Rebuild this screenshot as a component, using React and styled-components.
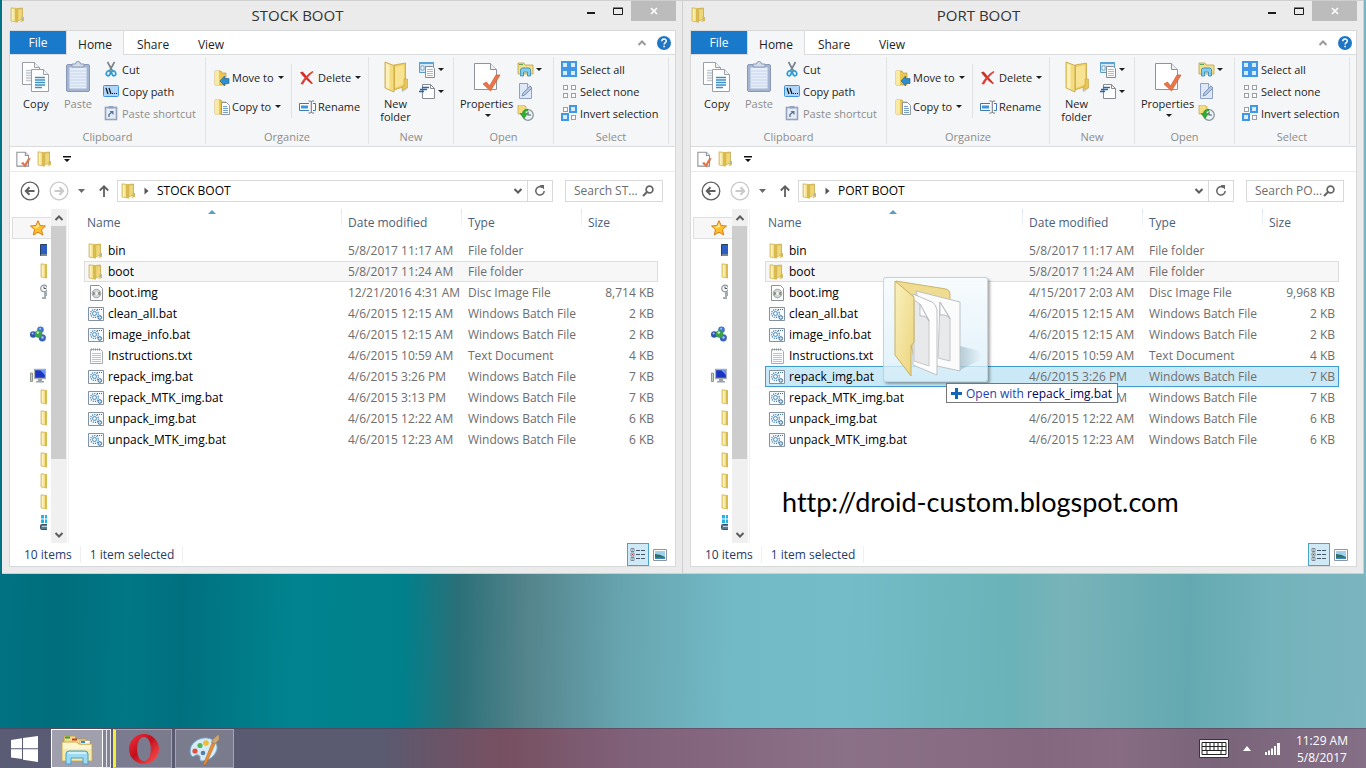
import React from 'react';
import styled, { createGlobalStyle } from 'styled-components';

const GlobalStyle = createGlobalStyle`
  * {
    box-sizing: border-box;
  }
  body {
    margin: 0;
    font-family: 'Open Sans', 'Noto Sans', sans-serif;
    font-size: 12px;
    color: #1e1e1e;
  }
  button, input {
    font: inherit;
    color: inherit;
  }
  svg {
    display: block;
    flex: none;
  }
`;

const Desktop = styled.div`
  min-height: 100vh;
  display: flex;
  flex-direction: column;
  justify-content: space-between;
  background: linear-gradient(
    91deg,
    #007384 0%,
    #006e7c 5%,
    #007786 10%,
    #00707f 14%,
    #00848f 22%,
    #00808b 30%,
    #2b7078 34%,
    #54848c 39%,
    #67a5b0 46%,
    #72bac6 54%,
    #74bcc8 62%,
    #6ab3b8 74%,
    #78b3b9 78%,
    #64a9b1 87%,
    #74b3bb 93%,
    #7bb5bf 100%
  );
`;
const Workspace = styled.main`
  display: flex;
  padding: 0 2px;
`;
const Frame = styled.section`
  position: relative;
  flex: 1 1 0;
  min-width: 0;
  padding: 0 6px 6px 7px;
  background: #ebebeb;
  border: 1px solid #cfcfcf;
  border-left: 0;
`;
const PlainButton = styled.button`
  display: flex;
  align-items: center;
  padding: 0;
  border: 0;
  background: none;
  line-height: 13px;
  white-space: nowrap;
`;
const TitleBar = styled.header`
  display: flex;
  height: 29px;
  padding-left: 1px;
`;
const TitleIcon = styled.span`
  padding-top: 6px;
`;
const Title = styled.h1`
  flex: 1;
  margin: 0;
  padding-right: 8px;
  font-size: 15px;
  font-weight: 400;
  line-height: 29px;
  text-align: center;
  color: #333;
`;
const WindowButton = styled(PlainButton)`
  width: ${(p) => (p.$close ? 45 : 27)}px;
  height: 20px;
  justify-content: center;
  background: ${(p) => (p.$close ? '#bcbcbc' : 'none')};
`;
const Client = styled.div`
  display: flex;
  flex-direction: column;
  background: #fff;
  border: 1px solid #d6d8da;
`;

const TabStrip = styled.nav`
  display: flex;
  height: 24px;
  border-bottom: 1px solid #dadbdc;
`;
const Tab = styled(PlainButton)`
  justify-content: center;
  width: 58px;
  height: 24px;
  padding-top: 2px;
  border: solid ${(p) => (p.$active ? '#dadbdc' : 'transparent')};
  border-width: 0 1px;
  background: ${(p) => (p.$active ? '#f5f6f7' : 'none')};
`;
const FileTab = styled(PlainButton)`
  justify-content: center;
  width: 56px;
  height: 23px;
  background: #1979ca;
  color: #fff;
`;
const TabTools = styled.div`
  display: flex;
  align-items: center;
  gap: 10px;
  margin-left: auto;
  padding-right: 4px;
`;

const RibbonBar = styled.div`
  display: flex;
  height: 92px;
  padding: 2px 0;
  overflow: hidden;
  font-size: 11px;
  background: #f5f6f7;
  border-bottom: 1px solid #dadbdc;
`;
const Group = styled.section`
  display: flex;
  flex: none;
  flex-direction: column;
  width: ${(p) => p.$width}px;
  border-right: 1px solid #e2e3e4;
`;
const GroupBody = styled.div`
  display: flex;
  flex: 1;
  padding-left: ${(p) => p.$inset}px;
`;
const GroupLabel = styled.h2`
  margin: 0;
  font-size: 11px;
  font-weight: 400;
  line-height: 14px;
  text-align: center;
  color: #8c8c8c;
`;
const BigButton = styled(PlainButton)`
  flex-direction: column;
  gap: 4px;
  width: ${(p) => p.$width}px;
  padding-top: 4px;
  white-space: normal;
  text-align: center;
  color: ${(p) => (p.disabled ? '#8c8c8c' : 'inherit')};
`;
const Stack = styled.div`
  display: flex;
  flex-direction: column;
  width: ${(p) => (p.$width ? `${p.$width}px` : 'auto')};
  padding: ${(p) => (p.$tall ? 6 : 1)}px 0 0 ${(p) => p.$inset || 0}px;
`;
const StackDivider = styled.span`
  width: 1px;
  height: 54px;
  margin: 7px 7px 0 0;
  background: #e2e3e4;
`;
const SmallButton = styled(PlainButton)`
  gap: ${(p) => (p.$tight ? 2 : 3)}px;
  height: ${(p) => (p.$tall ? 29 : 22)}px;
  color: ${(p) => (p.disabled ? '#8c8c8c' : 'inherit')};
`;
const MenuButton = styled(SmallButton)`
  gap: 0;
`;
const Caret = styled.span`
  margin-left: 2px;
  border: 3px solid transparent;
  border-top-color: currentColor;
  border-bottom: 0;
`;

const QuickAccess = styled.div`
  display: flex;
  align-items: center;
  gap: 6px;
  height: 25px;
  padding-left: 6px;
  border-bottom: 1px solid #e9eaeb;
`;
const AddressRow = styled.div`
  display: flex;
  align-items: center;
  height: 37px;
  padding: 0 12px 0 10px;
`;
const NavButton = styled(PlainButton)`
  justify-content: center;
  width: ${(p) => p.$width}px;
  height: 22px;
  color: #5c5c5c;
`;
const UpButton = styled(NavButton)`
  width: 22px;
  margin-left: 8px;
`;
const AddressBox = styled.div`
  display: flex;
  flex: 1;
  align-items: center;
  height: 22px;
  margin: 0 12px 0 2px;
  padding-left: 3px;
  border: 1px solid #d9d9d9;
`;
const Crumb = styled(PlainButton)`
  flex: 1;
  gap: 8px;
  padding-left: 7px;
  color: #000;
`;
const Refresh = styled(NavButton)`
  border-left: 1px solid #d9d9d9;
`;
const SearchBox = styled.label`
  display: flex;
  align-items: center;
  width: 98px;
  height: 22px;
  padding: 0 8px;
  border: 1px solid #d9d9d9;
`;
const SearchInput = styled.input`
  flex: 1;
  min-width: 0;
  padding: 0;
  border: 0;
  outline: 0;
  &::placeholder {
    color: #6d6d6d;
  }
`;

const Main = styled.div`
  display: flex;
  height: 334px;
`;
const NavPane = styled.ul`
  width: 41px;
  margin: 0;
  padding: 8px 0 0 2px;
  overflow: hidden;
  list-style: none;
`;
const NavItem = styled.li`
  width: 35px;
  height: 21px;
  padding: 3px 0 0 ${(p) => (p.$child ? 28 : 18)}px;
  overflow: hidden;
`;
const SelectedNavItem = styled(NavItem)`
  width: 39px;
  height: 22px;
  padding: 2px 0 0 17px;
  background: #f7f7f7;
  border: 1px solid #dedede;
  border-right: 0;
`;
const ScrollTrack = styled.div`
  display: flex;
  flex-direction: column;
  width: 16px;
  margin-right: 1px;
  background: #f0f0f0;
`;
const ScrollArrow = styled(PlainButton)`
  justify-content: center;
  height: 17px;
`;
const ScrollThumb = styled.div`
  height: 233px;
  margin: 0 1px 0 0;
  background: #cdcdcd;
`;
const ScrollSpace = styled.div`
  flex: 1;
`;
const FilePane = styled.div`
  flex: 1;
  min-width: 0;
  padding: 0 17px 0 15px;
  border-left: 1px solid #f0f0f0;
`;
const FileTable = styled.table`
  width: 100%;
  table-layout: fixed;
  border-collapse: collapse;
  line-height: 16px;
  color: #6d6d6d;
`;
const HeadCell = styled.th`
  position: relative;
  width: ${(p) => (p.$width ? `${p.$width}px` : 'auto')};
  height: 31px;
  padding: 0 0 4px ${(p) => (p.$first ? 3 : 7)}px;
  font-weight: 400;
  text-align: left;
  color: #4c607a;
  background: ${(p) =>
    p.$first
      ? 'none'
      : 'linear-gradient(#d8e6f2, #eef3f8 70%, #fff) 0 0 / 1px 20px no-repeat'};
`;
const SortMark = styled.span`
  position: absolute;
  top: 1px;
  left: 50%;
  margin-left: -5px;
  border: 4px solid transparent;
  border-top: 0;
  border-bottom-color: #5b9dc0;
`;
const rowColors = {
  focused: ['#f7f7f7', '#dedede'],
  selected: ['#cbe8f6', '#3c9dcb'],
};
const FileRow = styled.tr`
  height: 21px;
  background: ${(p) => (p.$state ? rowColors[p.$state][0] : 'none')};
  outline: ${(p) =>
    p.$state ? `1px solid ${rowColors[p.$state][1]}` : 'none'};
  outline-offset: -1px;
`;
const Cell = styled.td`
  padding: 0 4px 0 7px;
  white-space: nowrap;
  text-align: ${(p) => (p.$right ? 'right' : 'left')};
`;
const NameCell = styled(Cell)`
  padding-left: 4px;
  color: #000;
`;
const FileName = styled.span`
  display: flex;
  align-items: center;
  gap: 4px;
`;

const StatusBar = styled.footer`
  display: flex;
  align-items: center;
  height: 23px;
  padding: 0 4px 0 14px;
  color: #1f3c66;
`;
const StatusText = styled.span`
  margin-right: 9px;
  padding-right: 8px;
  border-right: 1px solid #f0f0f0;
`;
const ViewButton = styled(PlainButton)`
  justify-content: center;
  width: 22px;
  height: 23px;
  border: 1px solid ${(p) => (p.$active ? '#4aa5c9' : 'transparent')};
  background: ${(p) => (p.$active ? '#cfe9f6' : 'none')};
`;
const ViewButtons = styled.div`
  display: flex;
  margin-left: auto;
`;
const Watermark = styled.p`
  margin: 32px 0 0 17px;
  font-family: Lato, sans-serif;
  font-size: 27px;
  font-variant-ligatures: none;
  line-height: 40px;
  color: #000;
`;

const DragGhost = styled.div`
  position: absolute;
  top: 276px;
  left: 200px;
  width: 105px;
  height: 105px;
  border: 1px solid rgba(160, 205, 225, 0.7);
  border-radius: 3px;
  background: linear-gradient(rgba(246, 251, 254, 0.9), rgba(215, 237, 248, 0.75));
  box-shadow: 2px 2px 3px rgba(0, 0, 0, 0.35);
`;
const DropTip = styled.div`
  position: absolute;
  top: 382px;
  left: 263px;
  display: flex;
  align-items: center;
  gap: 4px;
  height: 20px;
  padding: 0 5px 0 4px;
  border: 1px solid #767676;
  background: #fff;
  white-space: nowrap;
  color: #1f3fae;
`;
const DropTarget = styled.span`
  color: #00005f;
`;

const Taskbar = styled.footer`
  display: flex;
  align-items: center;
  height: 40px;
  padding-right: 18px;
  border-top: 1px solid rgba(50, 50, 70, 0.35);
  background: linear-gradient(
    90deg,
    #5a5b74 0%,
    #5a5a70 28%,
    #6a5468 32%,
    #775061 37%,
    #80617a 46%,
    #8b7188 62%,
    #84687f 76%,
    #876c83 82%,
    #79647a 89%,
    #846f86 100%
  );
`;
const StartButton = styled(PlainButton)`
  justify-content: center;
  width: 49px;
  height: 39px;
`;
const TaskButton = styled(PlainButton)`
  justify-content: center;
  width: ${(p) => (p.$active ? 52 : 59)}px;
  height: 39px;
  margin-left: ${(p) => (p.$paint ? 3 : 2)}px;
  border: 1px solid ${(p) => (p.$active ? '#fff' : '#a5a3b4')};
  border-left: ${(p) => (p.$alert ? '3px solid #f3ee3c' : '')};
  background: ${(p) => (p.$active ? '#a09fae' : 'rgba(255, 255, 255, 0.2)')};
`;
const StackedEdge = styled.span`
  width: 4px;
  height: 39px;
  border: solid #e8e8ee;
  border-width: 1px 1px 1px 0;
  background: rgba(255, 255, 255, 0.25);
`;
const Tray = styled.div`
  display: flex;
  align-items: center;
  gap: 14px;
  margin-left: auto;
`;
const Clock = styled.time`
  margin-left: 2px;
  line-height: 17px;
  text-align: center;
  color: #fff;
`;

function FolderIcon() {
  return (
    <svg width="16" height="16" viewBox="0 0 16 16">
      <path d="M7.500 1.500 12.500 1v11l-5 2z" fill="#e5c95e" stroke="#c2a244" strokeWidth=".7" />
      <path d="M1 .8 7.500 1.600v13.600L1 14z" fill="#f1df8c" stroke="#cdb056" strokeWidth=".7" />
      <path d="M5 1.200 7.500 1.600v13.600L5 14.700z" fill="#d9ba4c" />
      <path d="M2 2 3.500 2.200v11.500L2 13.400z" fill="#fbf3c2" />
      <path d="M8.400 3 12 2.500v9L8.400 13.500z" fill="#edd778" />
      <path d="M11.500 10H14v4l-4 1.200 1.500-1.600z" fill="#dcbd50" />
      <path d="M12.300 10.500h1v2.500h-1z" fill="#8fb9d8" />
    </svg>
  );
}

function BigFolderIcon() {
  return (
    <svg width="30" height="32" viewBox="0 0 30 32">
      <path d="M20 30 27 25v2l-5 4z" fill="#000" opacity=".18" />
      <path d="M13 4 24.500 2v23L13 29z" fill="#eccf63" stroke="#c9a23c" strokeWidth=".8" />
      <path d="M14 6 23 4v19l-9 4z" fill="#f7e391" />
      <path d="M4 1 13 4.500V31L4 27z" fill="#f3dc80" stroke="#c49e3c" strokeWidth=".8" />
      <path d="M5 2.500 8.500 4v24L5 26.700z" fill="#fbf0b8" />
      <path d="M23 18h3.500v8.500L21 29v-3l2-1z" fill="#e8c758" stroke="#c9a23c" strokeWidth=".6" />
    </svg>
  );
}

function PageLines({ x, y, lines }) {
  return (
    <g transform={`translate(${x} ${y})`}>
      <path d="M.5.5h12l5 5v17H.5z" fill="#fff" stroke="#9a9fa5" />
      <path d="M12.500.5v5h5" fill="#f2f2f2" stroke="#9a9fa5" />
      <path d="M4 8.500h10M4 11h10M4 13.500h10M4 16h10M4 18.500h7" stroke={lines} strokeWidth="1.300" />
    </g>
  );
}

function CopyIcon() {
  return (
    <svg width="30" height="32" viewBox="0 0 30 32">
      <PageLines x={1} y={1} lines="#c3c9d0" />
      <PageLines x={10} y={8} lines="#3f8ec4" />
    </svg>
  );
}

function PasteIcon() {
  return (
    <svg width="26" height="32" viewBox="0 0 26 32">
      <rect x="1.500" y="3.500" width="23" height="27" rx="1.500" fill="#a5b5d0" stroke="#8898b6" />
      <rect x="4.500" y="6.500" width="17" height="21" fill="#e6eefa" />
      <path d="M5 10h16M5 13h16M5 16h16M5 19h16M5 22h16M5 25h16" stroke="#c5d4ea" />
      <path d="M7 6V3h3.500a2.500 2.500 0 0 1 5 0H19v3z" fill="#d5dde9" stroke="#8898b6" />
    </svg>
  );
}

function CutIcon() {
  return (
    <svg width="16" height="16" viewBox="-1 0 16 16" fill="none">
      <path d="M3.500 1 8.500 10M10.500 1 5.500 10" stroke="#76818c" strokeWidth="1.600" />
      <ellipse cx="4.300" cy="12.300" rx="1.900" ry="2.500" stroke="#2c9bd6" strokeWidth="1.700" transform="rotate(25 4.300 12.300)" />
      <ellipse cx="9.700" cy="12.300" rx="1.900" ry="2.500" stroke="#2c9bd6" strokeWidth="1.700" transform="rotate(-25 9.700 12.300)" />
    </svg>
  );
}

function CopyPathIcon() {
  return (
    <svg width="16" height="16" viewBox="0 0 16 16">
      <rect x=".5" y="2.500" width="15" height="11" rx="1" fill="#aed6fa" stroke="#3e92dc" />
      <path d="m3 5 2 6M6 5l2 6" stroke="#111" strokeWidth="1.200" />
      <path d="M9 10h1v1H9zM11 10h1v1h-1zM13 10h1v1h-1z" />
    </svg>
  );
}

function PasteShortcutIcon() {
  return (
    <svg width="16" height="16" viewBox="-1 0 16 16">
      <rect x="1.500" y="2.500" width="11" height="12" fill="#e5edf8" stroke="#93a3c0" strokeWidth="1.600" />
      <path d="M4.500 1h5v2.500h-5z" fill="#93a3c0" />
      <path d="M5 12V9.500L8 7" fill="none" stroke="#5d7297" strokeWidth="1.400" />
      <path d="M5.500 6h4v4z" fill="#5d7297" />
    </svg>
  );
}

function MoveToIcon() {
  return (
    <svg width="16" height="16" viewBox="0 0 16 16">
      <path d="M1 1h6l1 2h4v12H1z" fill="#eac751" stroke="#c79b2c" strokeWidth=".7" />
      <path d="M1 1h4v14H1z" fill="#f9e9a2" />
      <path d="M15 8.500v5h-4.500V16L6 11l4.500-5v2.500z" fill="#2e8fd0" stroke="#1b5d94" strokeWidth=".6" />
    </svg>
  );
}

function CopyToIcon() {
  return (
    <svg width="16" height="16" viewBox="0 0 16 16">
      <path d="M1 1h6l1 2h4v12H1z" fill="#eac751" stroke="#c79b2c" strokeWidth=".7" />
      <path d="M1 1h4v14H1z" fill="#f9e9a2" />
      <path d="M7.500 3.500h5l3 3v9h-8z" fill="#fff" stroke="#7a8188" strokeWidth=".8" />
      <path d="M9 7.500h4M9 9.500h5M9 11.500h5M9 13.500h5" stroke="#4f87b5" strokeWidth=".8" />
    </svg>
  );
}

function DeleteIcon() {
  return (
    <svg width="17" height="16" viewBox="0 0 17 16">
      <path d="M1 2.500 3.500 1.500C6 4 10 9 14 13.500L12.500 14C8 10.500 4 6.500 1 2.500z" fill="#cf2f24" />
      <path d="M14.500 2C10 5.500 6.500 9.500 4 14.500L1.500 14C4 9 8.500 4 13.500 1z" fill="#dd4034" />
    </svg>
  );
}

function RenameIcon() {
  return (
    <svg width="17" height="16" viewBox="0 0 17 16">
      <path d="M10 4.500H.5v7H10M14 4.500h2.500v7H14" fill="#fff" stroke="#3b7ab0" />
      <path d="M2 6.500h7v3H2z" fill="#3b95dc" />
      <path d="M9.500 2h2l.8.800.8-.8h2M9.500 14h2l.8-.8.8.800h2M12.300 2.500v11" fill="none" stroke="#6e7780" />
    </svg>
  );
}

function NewItemIcon() {
  return (
    <svg width="17" height="17" viewBox="0 0 17 17">
      <path d="M.5 1.500h14v10H.5z" fill="#d5e9f8" stroke="#5b9bc9" />
      <path d="M0 1h15v2H0z" fill="#5aa4d8" />
      <path d="M2 5h3v4H2z" fill="#fff" stroke="#4f8dbd" strokeWidth=".7" />
      <path d="M6.500 5.500h7l2 2v9h-9z" fill="#fff" stroke="#858b91" />
      <path d="M8 8.500h6M8 10.500h6M8 12.500h6M8 14.500h6" stroke="#a9afb5" strokeWidth=".9" />
    </svg>
  );
}

function EasyAccessIcon() {
  return (
    <svg width="17" height="17" viewBox="0 0 17 17">
      <path d="M3.500 1.500h8l4 4v10h-12z" fill="#fff" stroke="#858b91" />
      <path d="M11.500 1.500v4h4" fill="none" stroke="#858b91" />
      <path d="M3 4.500h7M1 6.500h7M0 8.500h5" stroke="#2b68ab" strokeWidth="1.300" />
    </svg>
  );
}

function PropertiesIcon({ size = 32 }) {
  return (
    <svg width={size === 32 ? 28 : 15} height={size} viewBox="0 0 28 32">
      <path d="M1.500 2.500h16l6 6v20h-22z" fill="#fff" stroke="#8d9399" strokeWidth={size === 32 ? 1 : 2} />
      <path d="M17.500 2.500v6h6" fill="#eef0f1" stroke="#8d9399" strokeWidth={size === 32 ? 1 : 2} />
      <path d="m10 23 3.500-2 3 4L23 14h4L17.500 30z" fill="#e9764a" stroke="#cf5a32" strokeWidth=".7" />
    </svg>
  );
}

function OpenIcon() {
  return (
    <svg width="17" height="16" viewBox="0 0 17 16">
      <path d="M1 2h6l1 2h8v9H1z" fill="#f4e08a" stroke="#bf9f43" strokeWidth=".8" />
      <path d="M2 3h4v1H2z" fill="#5fa552" />
      <path d="M3.500 15V9a2 2 0 0 1 2-2h6a2 2 0 0 1 2 2v6h-3v-4h-4v4z" fill="#7fcdf0" stroke="#2e86b8" strokeWidth=".8" />
    </svg>
  );
}

function EditIcon() {
  return (
    <svg width="17" height="16" viewBox="0 0 17 16">
      <path d="M2.500.5h8l4 4v11h-12z" fill="#dfe8f7" stroke="#8fa2c4" />
      <path d="M10.500.5v4h4" fill="#f5f8fc" stroke="#8fa2c4" />
      <path d="m5 13 1-3 7-7 2 2-7 7z" fill="#b5c6e3" stroke="#7086b0" strokeWidth=".8" />
    </svg>
  );
}

function HistoryIcon() {
  return (
    <svg width="17" height="16" viewBox="0 0 17 16">
      <path d="M1 0h6l1 1.500h1V9H1z" fill="#f3dc7c" stroke="#c9a84a" strokeWidth=".7" />
      <circle cx="11" cy="10" r="5.300" fill="#e9f2f6" stroke="#8d979e" strokeWidth="1.300" />
      <path d="M11 6.500V10h3" fill="none" stroke="#555f68" strokeWidth="1.200" />
      <path d="M11 4.200C7 4 5.500 6.500 5.500 8.500H3l4 5 3.500-5H8.200c0-1.800 1-3 2.800-3z" fill="#2fae31" stroke="#16801c" strokeWidth=".5" />
    </svg>
  );
}

const selectLayouts = {
  all: [1, 1, 1, 1],
  none: [0, 0, 0, 0],
  invert: [0, 1, 1, 0],
};

function SelectIcon({ kind }) {
  return (
    <svg width="16" height="16" viewBox="0 0 16 16">
      {selectLayouts[kind].map((on, i) => {
        const x = (i % 2) * 8;
        const y = Math.floor(i / 2) * 8;
        return on ? (
          <rect key={i} x={x + 1} y={y + 1} width="6" height="6" fill="#d9ecfd" stroke="#3f97e8" strokeWidth="2" />
        ) : (
          <rect key={i} x={x + 2.5} y={y + 2.5} width="4" height="4" fill="#fff" stroke="#9a9fa4" />
        );
      })}
    </svg>
  );
}

function HelpIcon() {
  return (
    <svg width="14" height="14" viewBox="0 0 14 14">
      <circle cx="7" cy="7" r="7" fill="#1f76c4" />
      <path d="M4.800 5.200C4.800 2.300 9.300 2.300 9.300 5 9.300 6.700 7.100 6.600 7.100 8.500" fill="none" stroke="#fff" strokeWidth="1.500" />
      <path d="M6.300 9.700h1.600v1.600H6.300z" fill="#fff" />
    </svg>
  );
}

function Chevron({ up, color = '#5c5c5c' }) {
  return (
    <svg width="10" height="8" viewBox="0 0 10 8">
      <path d={up ? 'M1.500 6 5 2.500 8.500 6' : 'M1.500 2 5 5.500 8.500 2'} fill="none" stroke={color} strokeWidth="2" />
    </svg>
  );
}

function ArrowCircle({ forward }) {
  const color = forward ? '#c9c9c9' : '#5f5f5f';
  return (
    <svg width="20" height="20" viewBox="0 0 20 20" fill="none" stroke={color}>
      <circle cx="10" cy="10" r="8.800" strokeWidth="1.300" />
      <path d={forward ? 'M5.500 10h8M10.500 6.200 14.200 10l-3.700 3.800' : 'M14.500 10h-8M9.500 6.200 5.800 10l3.700 3.800'} strokeWidth="2" />
    </svg>
  );
}

function DiscImageIcon() {
  return (
    <svg width="16" height="16" viewBox="0 0 16 16">
      <path d="M2.500.5h9l3 3v12h-12z" fill="#fff" stroke="#8e9297" />
      <circle cx="8.500" cy="8.500" r="4.300" fill="#d3d7d9" stroke="#8e9297" strokeWidth=".8" />
      <path d="m5 6.500 3.500 2L5 10.500zM12 6.500l-3.500 2 3.500 2z" fill="#87927f" />
      <circle cx="8.500" cy="8.500" r="1.300" fill="#fff" />
    </svg>
  );
}

function BatchIcon() {
  return (
    <svg width="16" height="16" viewBox="0 0 16 16">
      <path d="M.5 1.500h15v13H.5z" fill="#f8fbfd" stroke="#8590a0" />
      <path d="M9 3.500h5" stroke="#3f6c9a" strokeDasharray="1 1" />
      <circle cx="6.500" cy="7.500" r="3.900" fill="none" stroke="#4a80b2" strokeWidth="1.300" strokeDasharray="1.200 1" />
      <circle cx="6.500" cy="7.500" r="2" fill="#e8f3fa" stroke="#4b8dc2" />
      <circle cx="11.800" cy="11.500" r="1.800" fill="#d4e9f6" stroke="#336a9c" />
    </svg>
  );
}

function TextIcon() {
  return (
    <svg width="16" height="16" viewBox="0 0 16 16">
      <path d="M2.500 1.500h10l2 2v12h-12z" fill="#fafcfd" stroke="#a6acb2" />
      <path d="M3 1.500h9" stroke="#8b9197" strokeWidth="2" strokeDasharray="1 1" />
      <path d="M4 5.500h9M4 7.500h9M4 9.500h9M4 11.500h9M4 13.500h9" stroke="#b5c6d5" />
    </svg>
  );
}

function StarIcon() {
  return (
    <svg width="16" height="16" viewBox="0 0 16 16">
      <path d="M8 .7 10.200 5.500 15.500 6 11.500 9.600 12.700 15 8 12.200 3.300 15l1.200-5.400L.5 6l5.300-.5z" fill="#fbc02c" stroke="#dd7b1c" />
      <path d="M8 3 9.300 6.500 6 8 3 7l3.500-.5z" fill="#fff0a0" />
    </svg>
  );
}

function MonitorIcon() {
  return (
    <svg width="16" height="16" viewBox="0 0 16 16">
      <path d="M.5 2.500h15v11H.5z" fill="#2b5fc4" stroke="#27405f" />
      <path d="M1 12h14v2H1z" fill="#7a8896" />
    </svg>
  );
}

function RecentIcon() {
  return (
    <svg width="16" height="16" viewBox="0 0 16 16">
      <circle cx="4" cy="4.500" r="3.300" fill="#f5f7f8" stroke="#8e979e" strokeWidth="1.200" />
      <path d="M4 2.500v2h2" fill="none" stroke="#555" />
      <path d="M4 8h6v4H6v3H2v-2h2z" fill="#a4adb3" />
    </svg>
  );
}

function HomegroupIcon() {
  return (
    <svg width="16" height="16" viewBox="0 0 16 16">
      <circle cx="10.500" cy="3.800" r="3.300" fill="#3f74d0" />
      <circle cx="3.200" cy="8.500" r="3.200" fill="#2f55b4" />
      <circle cx="12.300" cy="11.800" r="3.600" fill="#3b62bd" />
      <circle cx="8.500" cy="8" r="3.800" fill="#3aa04a" />
      <circle cx="7.800" cy="6.600" r="1.300" fill="#b9eab0" />
      <circle cx="10.200" cy="2.800" r="1" fill="#a9c4f5" />
      <circle cx="2.600" cy="7.400" r="1" fill="#a9c4f5" />
      <circle cx="12.500" cy="11.500" r="1.200" fill="#a9c4f5" />
    </svg>
  );
}

function ComputerIcon() {
  return (
    <svg width="16" height="16" viewBox="0 0 16 16">
      <path d="M.5 5h2v8.500h-2z" fill="#c3d2bd" stroke="#79837a" strokeWidth=".8" />
      <path d="M4.500 1.500h11v9h-11z" fill="#1a35c4" stroke="#a9afb5" strokeWidth="1.300" />
      <path d="M10 2h5v5z" fill="#6f97f2" />
      <path d="M8 11h4v2h2v1.500H6V13h2z" fill="#9aa1a8" />
    </svg>
  );
}

function DriveIcon() {
  return (
    <svg width="16" height="16" viewBox="0 0 16 16">
      <path d="M1 0h3v3.500H1zM5 0h3v3.500H5zM1 4.500h3V8H1zM5 4.500h3V8H5z" fill="#22b3ea" />
      <rect x=".5" y="9.500" width="15" height="5" rx="1" fill="#587b92" stroke="#3d5566" />
      <path d="M2 11h8v1H2z" fill="#b8d2e0" />
    </svg>
  );
}

function DraggedFolder() {
  return (
    <svg width="103" height="103" viewBox="0 0 103 103">
      <defs>
        <linearGradient id="ghostShade" x1="0" y1="0" x2="1" y2="0">
          <stop offset="0" stopColor="#5c7f92" stopOpacity=".35" />
          <stop offset="1" stopColor="#5c7f92" stopOpacity="0" />
        </linearGradient>
        <linearGradient id="ghostFlap" x1="0" y1="0" x2="1" y2="1">
          <stop offset="0" stopColor="#faf0bd" />
          <stop offset="1" stopColor="#ead47c" />
        </linearGradient>
      </defs>
      <path d="M76 92 96 82q4-6-4-10l-16-4z" fill="url(#ghostShade)" />
      <path d="M12 3 62 11q4 1 4 5v50L30 80z" fill="#f0dc90" stroke="#cdb566" />
      <path d="M32 13 76 24v69L53 88z" fill="#fbfbfb" stroke="#bcc2c6" />
      <path d="M56 24 66 40v43l-12-3z" fill="#e7e9ea" stroke="#c4c4c4" />
      <path d="M56 24v13q7-1 10 4z" fill="#fff" stroke="#b8bcc0" />
      <path d="M29 16 48 24q4 2 5 8v65L29 87z" fill="#fdfdfd" stroke="#bcc2c6" />
      <path d="M36 26 45 42v46L30 83V22z" fill="#e7e9ea" stroke="#c8c8c8" />
      <path d="M36 26v12q6-1 9 5z" fill="#fff" stroke="#b8bcc0" />
      <path d="M11 3 30 19v45l-3 4v30L11 77z" fill="url(#ghostFlap)" stroke="#c9b05e" />
    </svg>
  );
}

const icons = {
  folder: FolderIcon,
  disc: DiscImageIcon,
  batch: BatchIcon,
  text: TextIcon,
};

const navItems = [
  { Icon: MonitorIcon, child: true },
  { Icon: FolderIcon, child: true },
  { Icon: RecentIcon, child: true },
  {},
  { Icon: HomegroupIcon },
  {},
  { Icon: ComputerIcon },
  { Icon: FolderIcon, child: true },
  { Icon: FolderIcon, child: true },
  { Icon: FolderIcon, child: true },
  { Icon: FolderIcon, child: true },
  { Icon: FolderIcon, child: true },
  { Icon: FolderIcon, child: true },
  { Icon: DriveIcon, child: true },
];

const baseFiles = [
  ['folder', 'bin', '5/8/2017 11:17 AM', 'File folder', ''],
  ['folder', 'boot', '5/8/2017 11:24 AM', 'File folder', ''],
  ['disc', 'boot.img', '12/21/2016 4:31 AM', 'Disc Image File', '8,714 KB'],
  ['batch', 'clean_all.bat', '4/6/2015 12:15 AM', 'Windows Batch File', '2 KB'],
  ['batch', 'image_info.bat', '4/6/2015 12:15 AM', 'Windows Batch File', '2 KB'],
  ['text', 'Instructions.txt', '4/6/2015 10:59 AM', 'Text Document', '4 KB'],
  ['batch', 'repack_img.bat', '4/6/2015 3:26 PM', 'Windows Batch File', '7 KB'],
  ['batch', 'repack_MTK_img.bat', '4/6/2015 3:13 PM', 'Windows Batch File', '7 KB'],
  ['batch', 'unpack_img.bat', '4/6/2015 12:22 AM', 'Windows Batch File', '6 KB'],
  ['batch', 'unpack_MTK_img.bat', '4/6/2015 12:23 AM', 'Windows Batch File', '6 KB'],
];
const portFiles = baseFiles.map((file) =>
  file[1] === 'boot.img'
    ? ['disc', 'boot.img', '4/15/2017 2:03 AM', 'Disc Image File', '9,968 KB']
    : file,
);

function Ribbon() {
  return (
    <RibbonBar>
      <Group $width={196}>
        <GroupBody $inset={5}>
          <BigButton $width={42}>
            <CopyIcon />
            Copy
          </BigButton>
          <BigButton $width={42} disabled>
            <PasteIcon />
            Paste
          </BigButton>
          <Stack $inset={4}>
            <SmallButton>
              <CutIcon />
              Cut
            </SmallButton>
            <SmallButton>
              <CopyPathIcon />
              Copy path
            </SmallButton>
            <SmallButton disabled>
              <PasteShortcutIcon />
              Paste shortcut
            </SmallButton>
          </Stack>
        </GroupBody>
        <GroupLabel>Clipboard</GroupLabel>
      </Group>
      <Group $width={163}>
        <GroupBody $inset={8}>
          <Stack $tall $width={77}>
            <SmallButton $tall $tight>
              <MoveToIcon />
              Move to
              <Caret />
            </SmallButton>
            <SmallButton $tall $tight>
              <CopyToIcon />
              Copy to
              <Caret />
            </SmallButton>
          </Stack>
          <StackDivider />
          <Stack $tall>
            <SmallButton $tall $tight>
              <DeleteIcon />
              Delete
              <Caret />
            </SmallButton>
            <SmallButton $tall $tight>
              <RenameIcon />
              Rename
            </SmallButton>
          </Stack>
        </GroupBody>
        <GroupLabel>Organize</GroupLabel>
      </Group>
      <Group $width={85}>
        <GroupBody $inset={3}>
          <BigButton $width={47}>
            <BigFolderIcon />
            New folder
          </BigButton>
          <Stack>
            <MenuButton aria-label="New item">
              <NewItemIcon />
              <Caret />
            </MenuButton>
            <MenuButton aria-label="Easy access">
              <EasyAccessIcon />
              <Caret />
            </MenuButton>
          </Stack>
        </GroupBody>
        <GroupLabel>New</GroupLabel>
      </Group>
      <Group $width={100}>
        <GroupBody $inset={2}>
          <BigButton $width={61}>
            <PropertiesIcon />
            Properties
            <Caret />
          </BigButton>
          <Stack>
            <MenuButton aria-label="Open">
              <OpenIcon />
              <Caret />
            </MenuButton>
            <MenuButton disabled aria-label="Edit">
              <EditIcon />
            </MenuButton>
            <MenuButton aria-label="History">
              <HistoryIcon />
            </MenuButton>
          </Stack>
        </GroupBody>
        <GroupLabel>Open</GroupLabel>
      </Group>
      <Group $width={115}>
        <GroupBody $inset={7}>
          <Stack>
            <SmallButton>
              <SelectIcon kind="all" />
              Select all
            </SmallButton>
            <SmallButton>
              <SelectIcon kind="none" />
              Select none
            </SmallButton>
            <SmallButton>
              <SelectIcon kind="invert" />
              Invert selection
            </SmallButton>
          </Stack>
        </GroupBody>
        <GroupLabel>Select</GroupLabel>
      </Group>
    </RibbonBar>
  );
}

function FileList({ files, states }) {
  return (
    <FileTable>
      <thead>
        <tr>
          <HeadCell $first>
            Name
            <SortMark />
          </HeadCell>
          <HeadCell $width={120}>Date modified</HeadCell>
          <HeadCell $width={120}>Type</HeadCell>
          <HeadCell $width={77}>Size</HeadCell>
        </tr>
      </thead>
      <tbody>
        {files.map(([kind, name, date, type, size]) => {
          const Icon = icons[kind];
          return (
            <FileRow key={name} $state={states[name]}>
              <NameCell>
                <FileName>
                  <Icon />
                  {name}
                </FileName>
              </NameCell>
              <Cell>{date}</Cell>
              <Cell>{type}</Cell>
              <Cell $right>{size}</Cell>
            </FileRow>
          );
        })}
      </tbody>
    </FileTable>
  );
}

function ExplorerWindow({ title, search, files, states, note, children }) {
  return (
    <Frame>
      <TitleBar>
        <TitleIcon>
          <FolderIcon />
        </TitleIcon>
        <Title>{title}</Title>
        <WindowButton aria-label="Minimize">
          <svg width="10" height="10" viewBox="0 0 10 10">
            <path d="M1 6h8v2H1z" fill="#1b1b1b" />
          </svg>
        </WindowButton>
        <WindowButton aria-label="Maximize">
          <svg width="10" height="10" viewBox="0 0 10 10">
            <path d="M.5 2.500h9v6h-9zM0 2h10" fill="none" stroke="#1b1b1b" />
          </svg>
        </WindowButton>
        <WindowButton $close aria-label="Close">
          <svg width="8" height="8" viewBox="0 0 8 8">
            <path d="m1 1 6 6M7 1 1 7" stroke="#fff" strokeWidth="1.600" />
          </svg>
        </WindowButton>
      </TitleBar>
      <Client>
        <TabStrip>
          <FileTab>File</FileTab>
          <Tab $active>Home</Tab>
          <Tab>Share</Tab>
          <Tab>View</Tab>
          <TabTools>
            <PlainButton aria-label="Collapse ribbon">
              <Chevron up color="#9a9a9a" />
            </PlainButton>
            <PlainButton aria-label="Help">
              <HelpIcon />
            </PlainButton>
          </TabTools>
        </TabStrip>
        <Ribbon />
        <QuickAccess>
          <PlainButton aria-label="Properties">
            <PropertiesIcon size={17} />
          </PlainButton>
          <PlainButton aria-label="New folder">
            <FolderIcon />
          </PlainButton>
          <NavButton $width={16} aria-label="Customize toolbar">
            <svg width="8" height="7" viewBox="0 0 8 7">
              <path d="M0 0h8v1.500H0zM1 3h6L4 6z" fill="#111" />
            </svg>
          </NavButton>
        </QuickAccess>
        <AddressRow>
          <NavButton $width={20} aria-label="Back">
            <ArrowCircle />
          </NavButton>
          <NavButton $width={38} aria-label="Forward">
            <ArrowCircle forward />
          </NavButton>
          <NavButton $width={7} aria-label="Recent locations">
            <svg width="7" height="4" viewBox="0 0 7 4">
              <path d="M0 0h7L3.500 4z" fill="#6a6a6a" />
            </svg>
          </NavButton>
          <UpButton aria-label="Up">
            <svg width="12" height="14" viewBox="0 0 12 14">
              <path d="M6 13V3M1.800 6.500 6 2.300l4.200 4.200" fill="none" stroke="#5f5f5f" strokeWidth="1.800" />
            </svg>
          </UpButton>
          <AddressBox>
            <FolderIcon />
            <Crumb>
              <svg width="5" height="8" viewBox="0 0 5 8">
                <path d="m.5.5 4 3.500-4 3.500z" fill="#555" />
              </svg>
              {title}
            </Crumb>
            <NavButton $width={18} aria-label="Previous locations">
              <Chevron />
            </NavButton>
            <Refresh $width={25} aria-label="Refresh">
              <svg width="12" height="12" viewBox="0 0 12 12">
                <path d="M8.500 2.500A4.200 4.200 0 1 0 10.200 6" fill="none" stroke="#666" strokeWidth="1.500" />
                <path d="M5.500 0h4.500v4.500z" fill="#666" />
              </svg>
            </Refresh>
          </AddressBox>
          <SearchBox>
            <SearchInput type="text" placeholder={search} aria-label={`Search ${title}`} />
            <svg width="12" height="12" viewBox="0 0 12 12">
              <circle cx="7.500" cy="4.500" r="3.400" fill="none" stroke="#666" strokeWidth="1.700" />
              <path d="M5 7 1 11" stroke="#666" strokeWidth="2.200" />
            </svg>
          </SearchBox>
        </AddressRow>
        <Main>
          <NavPane>
            <SelectedNavItem>
              <StarIcon />
            </SelectedNavItem>
            {navItems.map(({ Icon, child }, i) => (
              <NavItem key={i} $child={child}>
                {Icon && <Icon />}
              </NavItem>
            ))}
          </NavPane>
          <ScrollTrack>
            <ScrollArrow aria-label="Scroll up">
              <Chevron up />
            </ScrollArrow>
            <ScrollThumb />
            <ScrollSpace />
            <ScrollArrow aria-label="Scroll down">
              <Chevron />
            </ScrollArrow>
          </ScrollTrack>
          <FilePane>
            <FileList files={files} states={states} />
            {note && <Watermark>{note}</Watermark>}
          </FilePane>
        </Main>
        <StatusBar>
          <StatusText>10 items</StatusText>
          <StatusText>1 item selected</StatusText>
          <ViewButtons>
            <ViewButton $active aria-label="Details view">
              <svg width="16" height="14" viewBox="0 0 16 14">
                <path d="M1 .5h3v3H1zM1 5h3v3H1zM1 9.500h3v3H1z" fill="#fff" stroke="#7d8790" />
                <path d="M2 1.500h1v1H2zM2 10.500h1v1H2z" fill="#3a78b0" />
                <path d="M2 6h1v1H2z" fill="#b03030" />
                <path d="M6 2.500h4M11 2.500h4M6 6.500h4M11 6.500h4M6 10.500h4M11 10.500h4" stroke="#46586a" />
              </svg>
            </ViewButton>
            <ViewButton aria-label="Large icons view">
              <svg width="14" height="12" viewBox="0 0 14 12">
                <path d="M.5.5h13v11H.5z" fill="#fff" stroke="#8a97a3" />
                <path d="M2 2h10v8H2z" fill="#9fd0ee" />
                <path d="M2 5q5 0 10 3v2H2z" fill="#2d6f62" />
                <path d="M2 8.500h10V10H2z" fill="#3c86c4" />
              </svg>
            </ViewButton>
          </ViewButtons>
        </StatusBar>
      </Client>
      {children}
    </Frame>
  );
}

function TaskbarRow() {
  return (
    <Taskbar>
      <StartButton aria-label="Start">
        <svg width="27" height="26" viewBox="0 0 27 26">
          <path d="M0 4 11 2.300v9.900H0zM12 2.100 27 0v12.200H12zM0 13.200h11v9.900L0 21.500zM12 13.200h15V26l-15-2.300z" fill="#fff" />
        </svg>
      </StartButton>
      <TaskButton $active aria-label="File Explorer">
        <svg width="34" height="32" viewBox="0 0 34 32">
          <path d="M4 3h11l1 3h10v6H4z" fill="#f0da87" stroke="#b99a48" strokeWidth=".8" />
          <path d="M5 3.500h5v2H5z" fill="#2fa23c" />
          <path d="M12 5.500h5v2h-5z" fill="#c63a2c" />
          <path d="M2 9h15l2 2h13v17H2z" fill="#f7e9a6" stroke="#c3a653" strokeWidth=".8" />
          <path d="M20 7.500h10V11H20z" fill="#fff" stroke="#b99a48" strokeWidth=".6" />
          <path d="M21 8h4v2h-4z" fill="#3a86cf" />
          <path d="M3 10h13l2 2h13v4H3z" fill="#fcf5cf" />
          <path d="M6 31V21q0-3 3-3h16q3 0 3 3v10h-5v-6H11v6z" fill="#9ddaf3" stroke="#4c9fc7" />
          <path d="M8 20h18" stroke="#e1f6fd" strokeWidth="1.500" />
        </svg>
      </TaskButton>
      <StackedEdge />
      <StackedEdge />
      <TaskButton $alert aria-label="Opera">
        <svg width="32" height="32" viewBox="0 0 32 32">
          <defs>
            <linearGradient id="opera" x1="0" y1="0" x2="1" y2="1">
              <stop offset="0" stopColor="#f2323c" />
              <stop offset=".45" stopColor="#c50e1c" />
              <stop offset="1" stopColor="#ff5a57" />
            </linearGradient>
          </defs>
          <path fillRule="evenodd" d="M16 1a15 15 0 1 1 0 30 15 15 0 1 1 0-30zM16 4c-4.500 0-6.800 5.500-6.800 12S11.500 28 16 28s6.800-5.500 6.800-12S20.500 4 16 4z" fill="url(#opera)" />
        </svg>
      </TaskButton>
      <TaskButton $paint aria-label="Paint">
        <svg width="34" height="32" viewBox="0 0 34 32">
          <path d="M3 22C-1 12 10 4 19 5s12 8 9 14-9 9-14 9c-4 0 0-5-4-6-3-1-5 4-7 0z" fill="#d5ebf7" stroke="#78a9c8" />
          <circle cx="7" cy="18" r="2.600" fill="#e0503f" />
          <circle cx="12" cy="12.500" r="2.600" fill="#55b455" />
          <circle cx="18" cy="10" r="2.800" fill="#f0bb36" />
          <circle cx="15" cy="20" r="2.300" fill="#557fa8" />
          <path d="M15.500 31 24 10l3 1L18 31q-1.500 1.500-2.500 0z" fill="#e98f35" stroke="#b96a22" strokeWidth=".6" />
          <path d="M23.500 9.500C24 5 28 5 30 1q4 5-2.500 9.500z" fill="#c7a67b" stroke="#8f6e48" strokeWidth=".6" />
        </svg>
      </TaskButton>
      <Tray>
        <svg width="30" height="19" viewBox="0 0 30 19">
          <path d="M.5.500h29v18H.5z" fill="#fff" stroke="#3a3040" />
          <path d="M3 3.500h24v12H3zM3 7.500h24M3 11.500h24M7 3.500v8M11 3.500v8M15 3.500v8M19 3.500v8M23 3.500v8M8 11.500v4M22 11.500v4" fill="none" stroke="#222" />
        </svg>
        <svg width="8" height="5" viewBox="0 0 8 5">
          <path d="M4 0 8 5H0z" fill="#fff" />
        </svg>
        <svg width="15" height="12" viewBox="0 0 15 12">
          <path d="M0 9h2v3H0zM3 7.500h2V12H3zM6 5.500h2V12H6zM9 3h2v9H9zM12 0h3v12h-3z" fill="#fff" />
        </svg>
        <Clock>
          11:29 AM
          <br />
          5/8/2017
        </Clock>
      </Tray>
    </Taskbar>
  );
}

function App() {
  return (
    <Desktop>
      <GlobalStyle />
      <Workspace>
        <ExplorerWindow
          title="STOCK BOOT"
          search="Search ST..."
          files={baseFiles}
          states={{ boot: 'focused' }}
        />
        <ExplorerWindow
          title="PORT BOOT"
          search="Search PO..."
          files={portFiles}
          states={{ boot: 'focused', 'repack_img.bat': 'selected' }}
          note="http://droid-custom.blogspot.com"
        >
          <DragGhost>
            <DraggedFolder />
          </DragGhost>
          <DropTip>
            <svg width="11" height="11" viewBox="0 0 11 11">
              <path d="M4 0h3v4h4v3H7v4H4V7H0V4h4z" fill="#1565b5" />
            </svg>
            <span>
              Open with <DropTarget>repack_img.bat</DropTarget>
            </span>
          </DropTip>
        </ExplorerWindow>
      </Workspace>
      <TaskbarRow />
    </Desktop>
  );
}

export default App;
